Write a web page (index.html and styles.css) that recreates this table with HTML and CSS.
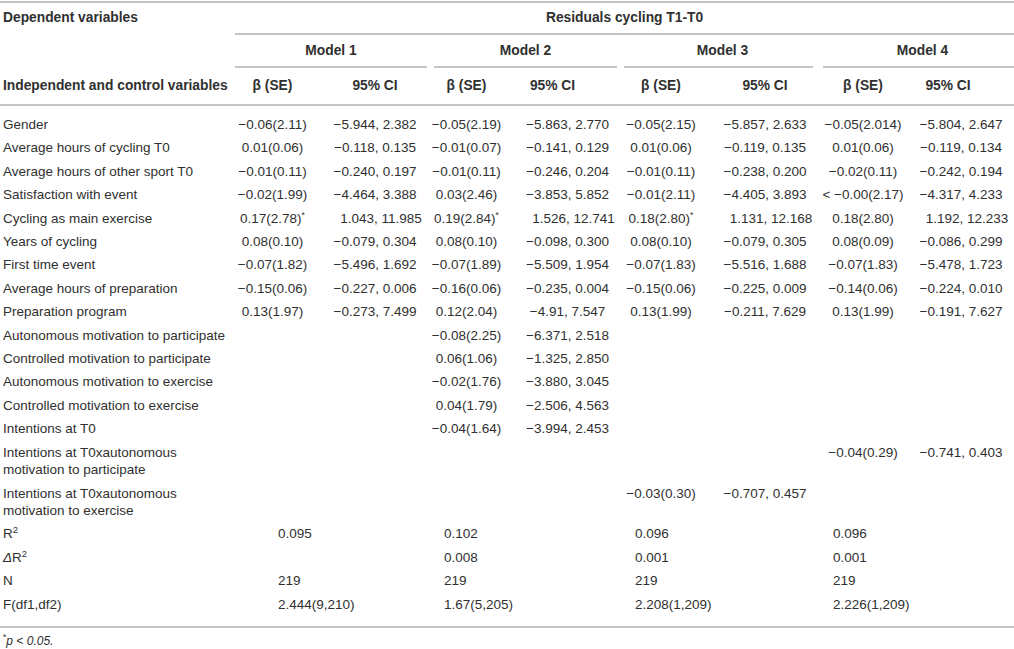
FILE: index.html
```html
<!DOCTYPE html>
<html lang="en">
<head>
<meta charset="utf-8">
<title>Residuals cycling T1-T0</title>
<link rel="stylesheet" href="styles.css">
</head>
<body>
<div class="wrap">
<table class="tbl">
<colgroup>
<col class="w0"><col class="wb1"><col class="wc1"><col class="wb2"><col class="wc2"><col class="wb3"><col class="wc3"><col class="wb4"><col class="wc4">
</colgroup>
<thead>
<tr class="r1">
<th class="lab">Dependent variables</th>
<th colspan="8" class="resid">Residuals cycling T1-T0</th>
</tr>
<tr class="r2">
<th class="lab"></th>
<th colspan="2" class="model"><div class="mline first">Model 1</div></th>
<th colspan="2" class="model"><div class="mline">Model 2</div></th>
<th colspan="2" class="model"><div class="mline m3">Model 3</div></th>
<th colspan="2" class="model"><div class="mline m4">Model 4</div></th>
</tr>
<tr class="r3">
<th class="lab">Independent and control variables</th>
<th class="b b1">β (SE)</th><th class="ci">95% CI</th>
<th class="b b2">β (SE)</th><th class="ci ci2">95% CI</th>
<th class="b b3">β (SE)</th><th class="ci">95% CI</th>
<th class="b">β (SE)</th><th class="ci ci4">95% CI</th>
</tr>
</thead>
<tbody>
<tr class="firstrow">
<td class="lab">Gender</td>
<td class="b b1">−0.06(2.11)</td><td class="ci">−5.944, 2.382</td>
<td class="b b2">−0.05(2.19)</td><td class="ci">−5.863, 2.770</td>
<td class="b b3">−0.05(2.15)</td><td class="ci">−5.857, 2.633</td>
<td class="b">−0.05(2.014)</td><td class="ci">−5.804, 2.647</td>
</tr>
<tr>
<td class="lab">Average hours of cycling T0</td>
<td class="b b1">0.01(0.06)</td><td class="ci">−0.118, 0.135</td>
<td class="b b2">−0.01(0.07)</td><td class="ci">−0.141, 0.129</td>
<td class="b b3">0.01(0.06)</td><td class="ci">−0.119, 0.135</td>
<td class="b">0.01(0.06)</td><td class="ci">−0.119, 0.134</td>
</tr>
<tr>
<td class="lab">Average hours of other sport T0</td>
<td class="b b1">−0.01(0.11)</td><td class="ci">−0.240, 0.197</td>
<td class="b b2">−0.01(0.11)</td><td class="ci">−0.246, 0.204</td>
<td class="b b3">−0.01(0.11)</td><td class="ci">−0.238, 0.200</td>
<td class="b">−0.02(0.11)</td><td class="ci">−0.242, 0.194</td>
</tr>
<tr>
<td class="lab">Satisfaction with event</td>
<td class="b b1">−0.02(1.99)</td><td class="ci">−4.464, 3.388</td>
<td class="b b2">0.03(2.46)</td><td class="ci">−3.853, 5.852</td>
<td class="b b3">−0.01(2.11)</td><td class="ci">−4.405, 3.893</td>
<td class="b">&lt; −0.00(2.17)</td><td class="ci">−4.317, 4.233</td>
</tr>
<tr>
<td class="lab">Cycling as main exercise</td>
<td class="b b1">0.17(2.78)<sup>*</sup></td><td class="ci pos">1.043, 11.985</td>
<td class="b b2">0.19(2.84)<sup>*</sup></td><td class="ci pos">1.526, 12.741</td>
<td class="b b3">0.18(2.80)<sup>*</sup></td><td class="ci pos">1.131, 12.168</td>
<td class="b">0.18(2.80)</td><td class="ci pos">1.192, 12.233</td>
</tr>
<tr>
<td class="lab">Years of cycling</td>
<td class="b b1">0.08(0.10)</td><td class="ci">−0.079, 0.304</td>
<td class="b b2">0.08(0.10)</td><td class="ci">−0.098, 0.300</td>
<td class="b b3">0.08(0.10)</td><td class="ci">−0.079, 0.305</td>
<td class="b">0.08(0.09)</td><td class="ci">−0.086, 0.299</td>
</tr>
<tr>
<td class="lab">First time event</td>
<td class="b b1">−0.07(1.82)</td><td class="ci">−5.496, 1.692</td>
<td class="b b2">−0.07(1.89)</td><td class="ci">−5.509, 1.954</td>
<td class="b b3">−0.07(1.83)</td><td class="ci">−5.516, 1.688</td>
<td class="b">−0.07(1.83)</td><td class="ci">−5.478, 1.723</td>
</tr>
<tr>
<td class="lab">Average hours of preparation</td>
<td class="b b1">−0.15(0.06)</td><td class="ci">−0.227, 0.006</td>
<td class="b b2">−0.16(0.06)</td><td class="ci">−0.235, 0.004</td>
<td class="b b3">−0.15(0.06)</td><td class="ci">−0.225, 0.009</td>
<td class="b">−0.14(0.06)</td><td class="ci">−0.224, 0.010</td>
</tr>
<tr>
<td class="lab">Preparation program</td>
<td class="b b1">0.13(1.97)</td><td class="ci">−0.273, 7.499</td>
<td class="b b2">0.12(2.04)</td><td class="ci">−4.91, 7.547</td>
<td class="b b3">0.13(1.99)</td><td class="ci">−0.211, 7.629</td>
<td class="b">0.13(1.99)</td><td class="ci">−0.191, 7.627</td>
</tr>
<tr>
<td class="lab">Autonomous motivation to participate</td>
<td class="b b1"></td><td class="ci"></td>
<td class="b b2">−0.08(2.25)</td><td class="ci">−6.371, 2.518</td>
<td class="b b3"></td><td class="ci"></td>
<td class="b"></td><td class="ci"></td>
</tr>
<tr>
<td class="lab">Controlled motivation to participate</td>
<td class="b b1"></td><td class="ci"></td>
<td class="b b2">0.06(1.06)</td><td class="ci">−1.325, 2.850</td>
<td class="b b3"></td><td class="ci"></td>
<td class="b"></td><td class="ci"></td>
</tr>
<tr>
<td class="lab">Autonomous motivation to exercise</td>
<td class="b b1"></td><td class="ci"></td>
<td class="b b2">−0.02(1.76)</td><td class="ci">−3.880, 3.045</td>
<td class="b b3"></td><td class="ci"></td>
<td class="b"></td><td class="ci"></td>
</tr>
<tr>
<td class="lab">Controlled motivation to exercise</td>
<td class="b b1"></td><td class="ci"></td>
<td class="b b2">0.04(1.79)</td><td class="ci">−2.506, 4.563</td>
<td class="b b3"></td><td class="ci"></td>
<td class="b"></td><td class="ci"></td>
</tr>
<tr>
<td class="lab">Intentions at T0</td>
<td class="b b1"></td><td class="ci"></td>
<td class="b b2">−0.04(1.64)</td><td class="ci">−3.994, 2.453</td>
<td class="b b3"></td><td class="ci"></td>
<td class="b"></td><td class="ci"></td>
</tr>
<tr>
<td class="lab">Intentions at T0xautonomous<br>motivation to participate</td>
<td class="b b1"></td><td class="ci"></td>
<td class="b b2"></td><td class="ci"></td>
<td class="b b3"></td><td class="ci"></td>
<td class="b">−0.04(0.29)</td><td class="ci">−0.741, 0.403</td>
</tr>
<tr>
<td class="lab">Intentions at T0xautonomous<br>motivation to exercise</td>
<td class="b b1"></td><td class="ci"></td>
<td class="b b2"></td><td class="ci"></td>
<td class="b b3">−0.03(0.30)</td><td class="ci">−0.707, 0.457</td>
<td class="b"></td><td class="ci"></td>
</tr>
<tr>
<td class="lab">R<sup class="sq">2</sup></td>
<td colspan="2" class="st s1">0.095</td>
<td colspan="2" class="st s2">0.102</td>
<td colspan="2" class="st s3">0.096</td>
<td colspan="2" class="st s4">0.096</td>
</tr>
<tr>
<td class="lab"><i>Δ</i>R<sup class="sq">2</sup></td>
<td colspan="2" class="st s1"></td>
<td colspan="2" class="st s2">0.008</td>
<td colspan="2" class="st s3">0.001</td>
<td colspan="2" class="st s4">0.001</td>
</tr>
<tr>
<td class="lab">N</td>
<td colspan="2" class="st s1">219</td>
<td colspan="2" class="st s2">219</td>
<td colspan="2" class="st s3">219</td>
<td colspan="2" class="st s4">219</td>
</tr>
<tr class="lastrow">
<td class="lab">F(df1,df2)</td>
<td colspan="2" class="st s1">2.444(9,210)</td>
<td colspan="2" class="st s2">1.67(5,205)</td>
<td colspan="2" class="st s3">2.208(1,209)</td>
<td colspan="2" class="st s4">2.226(1,209)</td>
</tr>
</tbody>
</table>
<p class="note"><sup>*</sup><i>p</i> <i>&lt;</i> <i>0.05.</i></p>
</div>
</body>
</html>
```
FILE: styles.css
```css
html, body {
  margin: 0;
  padding: 0;
  background: #ffffff;
}

body {
  font-family: "Liberation Sans", Arial, Helvetica, sans-serif;
  font-size: 13.5px;
  color: #303030;
}

.wrap {
  width: 1014px;
  padding-top: 1px;
}

.tbl {
  width: 1014px;
  table-layout: fixed;
  border-collapse: separate;
  border-spacing: 0;
  border-top: 2px solid #c4c4c4;
  border-bottom: 2px solid #c4c4c4;
}

.w0 { width: 235px; }
.wb1 { width: 85px; }
.wc1 { width: 110px; }
.wb2 { width: 85px; }
.wc2 { width: 105px; }
.wb3 { width: 92px; }
.wc3 { width: 106px; }
.wb4 { width: 90px; }
.wc4 { width: 106px; }

th, td {
  padding: 0;
  white-space: nowrap;
  vertical-align: top;
}

th {
  font-weight: bold;
  font-size: 13.8px;
}

.lab {
  text-align: left;
  padding-left: 3px;
}

.r1 th {
  line-height: 30px;
}

.resid {
  text-align: center;
  border-bottom: 2px solid #c4c4c4;
}

.r2 th {
  line-height: 31px;
}

.model {
  text-align: center;
}

.mline {
  border-bottom: 2px solid #c4c4c4;
  margin-left: 4px;
  margin-right: 3px;
}

.mline.first {
  margin-left: 0;
}

.mline.m3 {
  margin-right: 5px;
  padding-left: 8px;
}

.mline.m4 {
  margin-left: 5px;
  margin-right: 0;
  padding-left: 8px;
}

.r3 th {
  line-height: 36px;
  border-bottom: 2px solid #c4c4c4;
}

td {
  line-height: 17.4px;
  padding-top: 3px;
  padding-bottom: 3px;
}

td.lab {
  padding-left: 3px;
}

.b, .ci {
  text-align: center;
}

.b1 { padding-right: 10px; }
.b2 { padding-right: 12px; }
.b3 { padding-right: 10px; }

th.ci2 { padding-right: 30px; }
th.ci4 { padding-right: 26px; }

td.pos { padding-left: 12px; }

.firstrow td {
  padding-top: 10px;
}

.lastrow td {
  padding-bottom: 13px;
}

.st {
  text-align: left;
}

.s1 { padding-left: 43px; }
.s2 { padding-left: 14px; }
.s3 { padding-left: 15px; }
.s4 { padding-left: 15px; }

sup {
  font-size: 8.5px;
  line-height: 0;
  vertical-align: 5px;
}

sup.sq {
  font-size: 9.5px;
  vertical-align: 5px;
}

.note {
  margin: 0;
  padding-left: 3px;
  padding-top: 6px;
  font-size: 12px;
  line-height: 14px;
}
```
